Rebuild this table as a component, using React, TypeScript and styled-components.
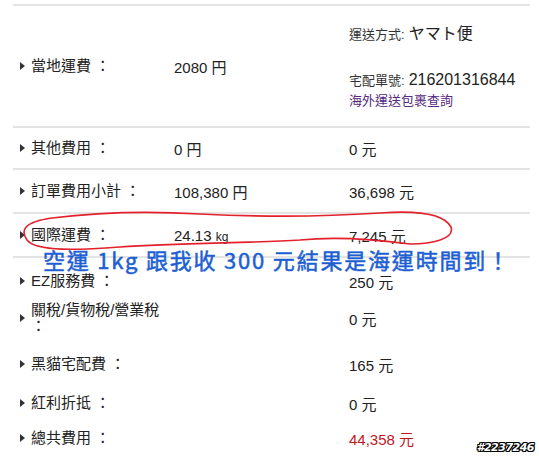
import React from 'react'
import styled, { createGlobalStyle } from 'styled-components'

const GlobalStyle = createGlobalStyle`
    html, body {
        margin: 0;
        padding: 0;
        background: #ffffff;
    }
    body {
        font-family: "Liberation Sans", "Noto Sans CJK TC", Arial, sans-serif;
        color: #222;
    }
`

const StyledPage = styled.div`
    position: relative;
    width: 539px;
    height: 457px;
    overflow: hidden;
    padding: 4px 9px 0 13px;
    box-sizing: border-box;
`

const StyledRow = styled.div<{ $h: number; $line?: boolean }>`
    display: grid;
    grid-template-columns: 161px 175px 1fr;
    align-items: center;
    box-sizing: border-box;
    height: ${(p) => p.$h}px;
    border-top: ${(p) => (p.$line ? '2px solid #e4e4e4' : 'none')};
    font-size: 15px;
`

const StyledLower = styled.div`
    border-top: 2px solid #e4e4e4;
    padding-top: 8px;
`

const StyledLabel = styled.div`
    display: flex;
    align-items: center;
    gap: 6px;
    padding-left: 7px;
    line-height: 16px;
`

const StyledArrow = styled.span`
    flex: none;
    width: 0;
    height: 0;
    border-top: 4.5px solid transparent;
    border-bottom: 4.5px solid transparent;
    border-left: 5px solid #333;
`

const StyledValue = styled.div<{ $red?: boolean }>`
    color: ${(p) => (p.$red ? '#c0161e' : '#222')};
`

const StyledUnit = styled.span`
    font-size: 12px;
`

const StyledShip = styled.div`
    display: flex;
    flex-direction: column;
    padding-bottom: 4px;
`

const StyledShipLine = styled.div<{ $gap: number }>`
    display: flex;
    align-items: baseline;
    gap: 4px;
    margin-top: ${(p) => p.$gap}px;
    font-size: 13px;
    color: #333;
`

const StyledBig = styled.span`
    font-size: 16px;
    color: #222;
`

const StyledLink = styled.a`
    margin-top: 1px;
    font-size: 13px;
    color: #55297f;
    text-decoration: none;
`

const StyledNote = styled.div`
    position: absolute;
    left: 43px;
    top: 249px;
    font-family: "Noto Sans CJK TC", "Liberation Sans", sans-serif;
    font-size: 22px;
    line-height: 20px;
    letter-spacing: 1.8px;
    color: #1d5fd3;
    -webkit-text-stroke: 0.5px #1d5fd3;
    white-space: nowrap;
`

const StyledCircle = styled.svg`
    position: absolute;
    left: 0;
    top: 0;
    pointer-events: none;
`

const StyledTag = styled.div`
    position: absolute;
    right: 5px;
    bottom: 3px;
    font-family: "DejaVu Sans", sans-serif;
    font-size: 11px;
    font-weight: bold;
    font-style: italic;
    letter-spacing: -0.5px;
    color: #fff;
    text-shadow: 1px 0 0 #000, -1px 0 0 #000, 0 1px 0 #000, 0 -1px 0 #000,
        1px 1px 0 #000, -1px -1px 0 #000, 1px -1px 0 #000, -1px 1px 0 #000;
`

type Fee = { label: React.ReactNode; tw: string; h: number; red?: boolean }

const lowerRows: Fee[] = [
    { label: 'EZ服務費 ：', tw: '250 元', h: 30 },
    { label: <>關稅/貨物稅/營業稅<br />：</>, tw: '0 元', h: 44 },
    { label: '黑貓宅配費 ：', tw: '165 元', h: 48 },
    { label: '紅利折抵 ：', tw: '0 元', h: 30 },
    { label: '總共費用 ：', tw: '44,358 元', h: 40, red: true },
]

const Label = ({ children }: { children: React.ReactNode }) => (
    <StyledLabel>
        <StyledArrow />
        <span>{children}</span>
    </StyledLabel>
)

const App = () => {
    return (
        <StyledPage>
            <GlobalStyle />
            <StyledRow $h={122} $line>
                <Label>當地運費 ：</Label>
                <StyledValue>2080 円</StyledValue>
                <StyledShip>
                    <StyledShipLine $gap={0}>
                        運送方式: <StyledBig>ヤマト便</StyledBig>
                    </StyledShipLine>
                    <StyledShipLine $gap={26}>
                        宅配單號: <StyledBig>216201316844</StyledBig>
                    </StyledShipLine>
                    <StyledLink href="#">海外運送包裹查詢</StyledLink>
                </StyledShip>
            </StyledRow>
            <StyledRow $h={42} $line>
                <Label>其他費用 ：</Label>
                <StyledValue>0 円</StyledValue>
                <StyledValue>0 元</StyledValue>
            </StyledRow>
            <StyledRow $h={44} $line>
                <Label>訂單費用小計 ：</Label>
                <StyledValue>108,380 円</StyledValue>
                <StyledValue>36,698 元</StyledValue>
            </StyledRow>
            <StyledRow $h={44} $line>
                <Label>國際運費 ：</Label>
                <StyledValue>
                    24.13 <StyledUnit>kg</StyledUnit>
                </StyledValue>
                <StyledValue>7,245 元</StyledValue>
            </StyledRow>
            <StyledLower>
                {lowerRows.map((r, i) => (
                    <StyledRow key={i} $h={r.h}>
                        <Label>{r.label}</Label>
                        <span />
                        <StyledValue $red={r.red}>{r.tw}</StyledValue>
                    </StyledRow>
                ))}
            </StyledLower>

            <StyledCircle width="539" height="457" viewBox="0 0 539 457">
                <path
                    d="M 52 218 C 100 212, 150 211, 200 214 C 260 217, 320 217, 380 213 C 420 210, 444 214, 451 227 C 455 239, 432 244, 410 244 C 380 240, 340 236, 300 240 C 250 243, 180 243, 120 247 C 80 250, 36 252, 27 240 C 20 230, 24 222, 52 218"
                    fill="none"
                    stroke="#e3202b"
                    strokeWidth="1.6"
                />
            </StyledCircle>
            <StyledNote>空運 1kg 跟我收 300 元結果是海運時間到！</StyledNote>
            <StyledTag>#2237246</StyledTag>
        </StyledPage>
    )
}

export default App
